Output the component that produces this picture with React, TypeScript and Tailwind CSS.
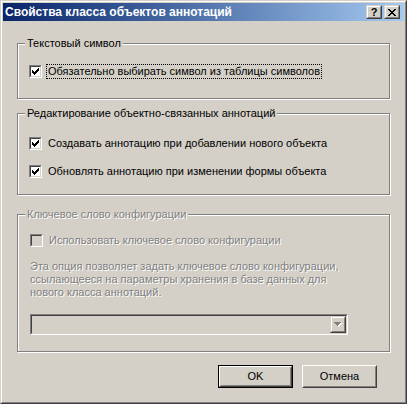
import React from "react";

const CheckMark = () => (
  <svg width="7" height="7" viewBox="0 0 7 7" shapeRendering="crispEdges" className="block">
    <path
      fill="#000000"
      d="M6 0h1v1h-1z M5 1h2v1h-2z M0 2h1v1h-1z M4 2h3v1h-3z M0 3h2v1h-2z M3 3h3v1h-3z M0 4h5v1h-5z M1 5h3v1h-3z M2 6h1v1h-1z"
    />
  </svg>
);

const CloseGlyph = () => (
  <svg width="8" height="7" viewBox="0 0 8 7" shapeRendering="crispEdges" className="block">
    <path
      fill="#000000"
      d="M0 0h2v1h-2z M6 0h2v1h-2z M1 1h2v1h-2z M5 1h2v1h-2z M2 2h4v1h-4z M3 3h2v1h-2z M2 4h4v1h-4z M1 5h2v1h-2z M5 5h2v1h-2z M0 6h2v1h-2z M6 6h2v1h-2z"
    />
  </svg>
);

const ArrowDisabled = () => (
  <svg width="8" height="5" viewBox="0 0 8 5" shapeRendering="crispEdges" className="block">
    <path fill="#ffffff" d="M1 1h7v1h-7z M2 2h5v1h-5z M3 3h3v1h-3z M4 4h1v1h-1z" />
    <path fill="#808080" d="M0 0h7v1h-7z M1 1h5v1h-5z M2 2h3v1h-3z M3 3h1v1h-1z" />
  </svg>
);

type CheckboxProps = {
  label: string;
  checked?: boolean;
  disabled?: boolean;
  focused?: boolean;
};

const Checkbox: React.FC<CheckboxProps> = ({ label, checked, disabled, focused }) => (
  <div className="flex items-center h-[15px]">
    <div className="w-[13px] h-[13px] border border-t-[#808080] border-l-[#808080] border-r-white border-b-white">
      <div
        className={`w-full h-full border border-t-[#404040] border-l-[#404040] border-r-[#d4d0c8] border-b-[#d4d0c8] p-px ${
          disabled ? "bg-[#d4d0c8]" : "bg-white"
        }`}
      >
        {checked && <CheckMark />}
      </div>
    </div>
    <span
      className={`ml-[4px] px-px leading-[13px] border border-dotted ${
        focused ? "border-black" : "border-transparent"
      } ${disabled ? "text-[#808080] [text-shadow:1px_1px_0_#ffffff]" : ""}`}
    >
      {label}
    </span>
  </div>
);

type GroupProps = {
  title: string;
  disabled?: boolean;
  className: string;
  children: React.ReactNode;
};

const Group: React.FC<GroupProps> = ({ title, disabled, className, children }) => (
  <div
    className={`relative w-[373px] border border-[#808080] shadow-[inset_1px_1px_0_#ffffff,1px_1px_0_#ffffff] ${className}`}
  >
    <span
      className={`absolute left-[7px] -top-[7px] px-[2px] bg-[#d4d0c8] leading-[13px] ${
        disabled ? "text-[#808080] [text-shadow:1px_1px_0_#ffffff]" : ""
      }`}
    >
      {title}
    </span>
    {children}
  </div>
);

const PushButton: React.FC<{ label: string; isDefault?: boolean }> = ({ label, isDefault }) => (
  <div className={`w-[75px] h-[23px] ${isDefault ? "border border-black" : ""}`}>
    <div className="w-full h-full border border-t-white border-l-white border-r-[#404040] border-b-[#404040]">
      <div className="w-full h-full border border-t-[#d4d0c8] border-l-[#d4d0c8] border-r-[#808080] border-b-[#808080] flex items-center justify-center">
        {label}
      </div>
    </div>
  </div>
);

const CaptionButton: React.FC<{ children: React.ReactNode }> = ({ children }) => (
  <div className="w-[16px] h-[14px] bg-[#d4d0c8] border border-t-[#d4d0c8] border-l-[#d4d0c8] border-r-[#404040] border-b-[#404040]">
    <div className="w-full h-full border border-t-white border-l-white border-r-[#808080] border-b-[#808080] flex items-center justify-center">
      {children}
    </div>
  </div>
);

export default function App() {
  return (
    <div className="w-[407px] h-[404px] bg-[#d4d0c8] border border-t-[#d4d0c8] border-l-[#d4d0c8] border-r-[#404040] border-b-[#404040] font-['Liberation_Sans',Arial,sans-serif] text-[11px] text-black">
      <div className="h-full border border-t-white border-l-white border-r-[#808080] border-b-[#808080] p-px flex flex-col">
        <div className="h-[18px] flex items-center bg-gradient-to-r from-[#0a246a] to-[#a6caf0] pl-[2px] pr-[4px]">
          <span className="flex-1 text-white font-bold text-[12px] leading-[14px]">
            Свойства класса объектов аннотаций
          </span>
          <div className="flex gap-[2px]">
            <CaptionButton>
              <span className="font-bold text-[11px] leading-[10px]">?</span>
            </CaptionButton>
            <CaptionButton>
              <CloseGlyph />
            </CaptionButton>
          </div>
        </div>

        <div className="flex flex-col pl-[14px] pt-[22px]">
          <Group title="Текстовый символ" className="h-[56px] pt-[20px] pl-[11px]">
            <Checkbox label="Обязательно выбирать символ из таблицы символов" checked focused />
          </Group>

          <Group
            title="Редактирование объектно-связанных аннотаций"
            className="h-[82px] mt-[14px] pt-[22px] pl-[11px] flex flex-col gap-[13px]"
          >
            <Checkbox label="Создавать аннотацию при добавлении нового объекта" checked />
            <Checkbox label="Обновлять аннотацию при изменении формы объекта" checked />
          </Group>

          <Group
            title="Ключевое слово конфигурации"
            disabled
            className="h-[138px] mt-[19px] pt-[18px] pl-[12px]"
          >
            <Checkbox label="Использовать ключевое слово конфигурации" disabled />
            <p className="mt-[12px] leading-[13px] text-[#808080] [text-shadow:1px_1px_0_#ffffff]">
              Эта опция позволяет задать ключевое слово конфигурации,
              <br />
              ссылающееся на параметры хранения в базе данных для
              <br />
              нового класса аннотаций.
            </p>
            <div className="mt-[15px] w-[318px] h-[21px] border border-t-[#808080] border-l-[#808080] border-r-white border-b-white">
              <div className="w-full h-full border border-t-[#404040] border-l-[#404040] border-r-[#d4d0c8] border-b-[#d4d0c8] flex justify-end">
                <div className="w-[16px] h-full border border-t-[#d4d0c8] border-l-[#d4d0c8] border-r-[#404040] border-b-[#404040]">
                  <div className="w-full h-full border border-t-white border-l-white border-r-[#808080] border-b-[#808080] flex items-center justify-center">
                    <ArrowDisabled />
                  </div>
                </div>
              </div>
            </div>
          </Group>
        </div>

        <div className="flex justify-end gap-[9px] pr-[27px] mt-[13px]">
          <PushButton label="OK" isDefault />
          <PushButton label="Отмена" />
        </div>
      </div>
    </div>
  );
}
